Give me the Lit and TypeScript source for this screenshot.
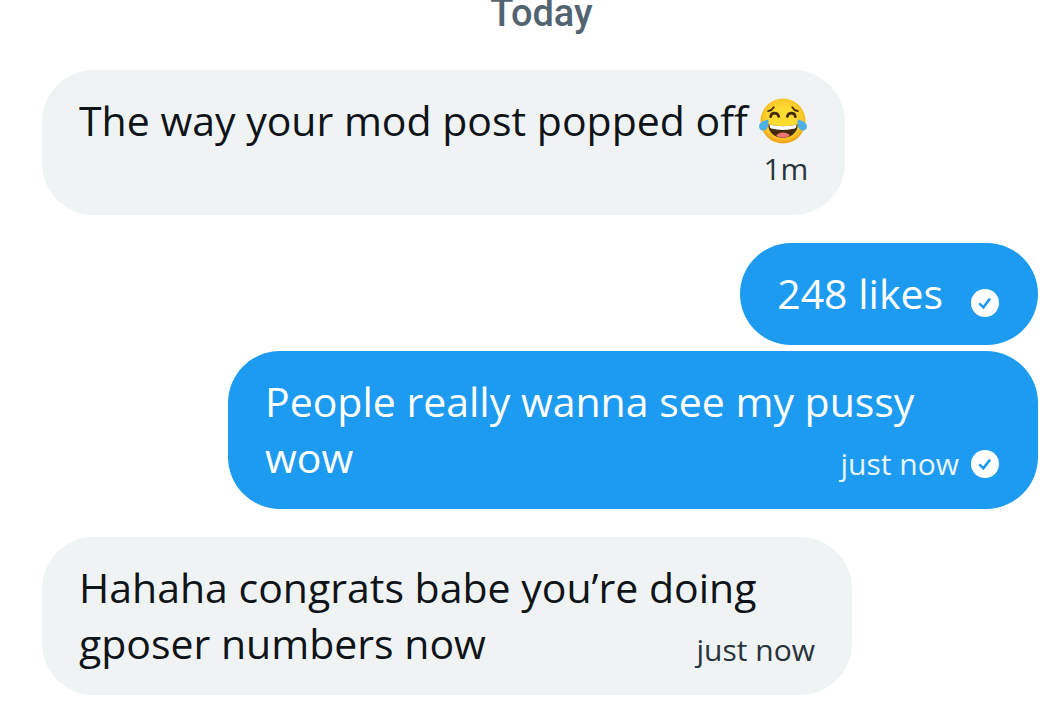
import { LitElement, html, css, svg, nothing } from "lit";
import { customElement, property } from "lit/decorators.js";

interface Message {
  text: string;
  time?: string;
  mine?: boolean;
  sent?: boolean;
  laughing?: boolean;
  stacked?: boolean;
}

const checkBadge = svg`
  <svg class="badge" viewBox="0 0 28 28" role="img" aria-label="Sent">
    <circle cx="14" cy="14" r="14" fill="#fff" />
    <path d="M8.300 14.400l4.100 4 6.600-8.800" fill="none" stroke="#1d9bf0" stroke-width="2.600" />
  </svg>`;

const joyFace = svg`
  <svg class="emoji" viewBox="0 0 48 46" role="img" aria-label="Face with tears of joy">
    <defs>
      <radialGradient id="skin" cx="50%" cy="45%" r="52%">
        <stop offset="0.5" stop-color="#fddb30" />
        <stop offset="0.85" stop-color="#fbc628" />
        <stop offset="1" stop-color="#f2a51d" />
      </radialGradient>
    </defs>
    <circle cx="24" cy="23" r="22.500" fill="url(#skin)" />
    <g fill="none" stroke="#422b0d" stroke-linecap="round">
      <path d="M9.200 13.200c2.200-.5 4.400-2 5.600-4M38.800 13.200c-2.200-.5-4.400-2-5.600-4" stroke-width="1.700" />
      <path d="M11.600 18.800c.5-4.900 6.800-4.900 8.200-.3M28.200 18.500c1.400-4.600 7.700-4.600 8.200.3" stroke-width="2.600" />
    </g>
    <path d="M9.400 26.300c9 2.600 20.200 2.600 29.200 0 .7 7.500-6 13.600-14.600 13.600s-15.300-6.100-14.600-13.600z" fill="#422b0d" />
    <path d="M10.600 26.600c8.500 2.300 18.300 2.300 26.800 0 .3 1.800-.4 3.500-1.600 4-7 1.700-16.600 1.700-23.600 0-1.200-.5-1.900-2.200-1.600-4z" fill="#fff" />
    <path d="M17.300 37.800c2.500-4.400 11-4.400 13.500 0-3.800 2.600-9.700 2.600-13.500 0z" fill="#ed7770" />
    <path d="M9.300 21.400c.5 4.700-.2 10.300-4.500 11-3.800.6-5.500-2.900-4.400-5.700.9-2.500 5.200-4.600 8.900-5.300zM38.700 21.400c-.5 4.700.2 10.300 4.500 11 3.800.6 5.500-2.900 4.400-5.700-.9-2.500-5.200-4.600-8.900-5.300z" fill="#4bb0e8" />
  </svg>`;

@customElement("chat-bubble")
export class ChatBubble extends LitElement {
  @property({ attribute: false }) message!: Message;

  static styles = css`
    :host {
      display: block;
      max-width: calc(100% - 186px);
    }
    .bubble {
      display: flow-root;
      padding: 22px 37px 24px;
      border-radius: 52px;
      background: #eff3f4;
      color: #0f1419;
      font-size: 41px;
      line-height: 56px;
    }
    .mine {
      background: #1d9bf0;
      color: #fff;
    }
    .meta {
      float: right;
      display: flex;
      align-items: center;
      gap: 12px;
      height: 32px;
      margin: 19px 0 0 24px;
      color: #28333b;
      font-size: 30px;
      line-height: 32px;
    }
    .mine .meta {
      margin-right: 2px;
      color: #e8f5fe;
    }
    .mine .icon-only {
      margin-top: 22px;
      margin-left: 28px;
    }
    .stacked {
      float: none;
      justify-content: flex-end;
      margin: 5px 0 6px;
    }
    .badge {
      display: block;
      width: 28px;
      height: 28px;
    }
    .emoji {
      width: 50px;
      height: 46px;
      vertical-align: -8px;
    }
  `;

  render() {
    const m = this.message;
    const metaClass = `meta ${m.stacked ? "stacked" : ""} ${m.time ? "" : "icon-only"}`;
    return html`<div class="bubble ${m.mine ? "mine" : ""}">
      <span>${m.text}${m.laughing ? html` ${joyFace}` : nothing}</span>
      <div class=${metaClass}>
        ${m.time ? html`<time>${m.time}</time>` : nothing}
        ${m.sent ? checkBadge : nothing}
      </div>
    </div>`;
  }
}

@customElement("app-root")
export class AppRoot extends LitElement {
  private groups: Message[][] = [
    [{ text: "The way your mod post popped off", time: "1m", laughing: true, stacked: true }],
    [
      { text: "248 likes", mine: true, sent: true },
      { text: "People really wanna see my pussy wow", time: "just now", mine: true, sent: true },
    ],
    [{ text: "Hahaha congrats babe you’re doing gposer numbers now", time: "just now" }],
  ];

  static styles = css`
    :host {
      display: block;
      min-height: 100vh;
      overflow: hidden;
      background: #fff;
      font-family: "Open Sans", "Noto Sans", sans-serif;
    }
    .day {
      margin: -10px 0 0 24px;
      color: #536471;
      font-family: Roboto, sans-serif;
      font-size: 38px;
      font-weight: 500;
      line-height: 46px;
      text-align: center;
    }
    .thread {
      display: flex;
      flex-direction: column;
      gap: 28px;
      padding: 34px 21px 20px 42px;
    }
    .group {
      display: flex;
      flex-direction: column;
      align-items: flex-start;
      gap: 6px;
    }
    .outgoing {
      align-items: flex-end;
    }
  `;

  render() {
    return html`<main>
      <h2 class="day">Today</h2>
      <div class="thread">
        ${this.groups.map(
          (group) => html`<section class="group ${group[0].mine ? "outgoing" : ""}">
            ${group.map((m) => html`<chat-bubble .message=${m}></chat-bubble>`)}
          </section>`,
        )}
      </div>
    </main>`;
  }
}
